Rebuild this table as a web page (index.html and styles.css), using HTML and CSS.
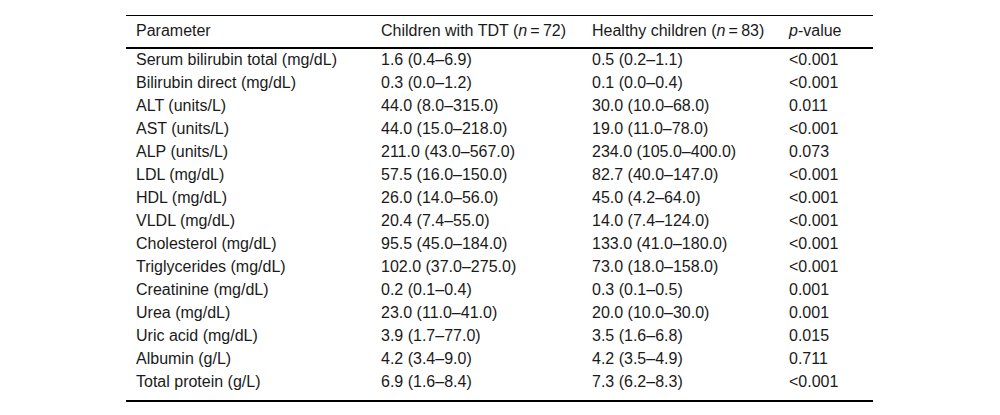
FILE: index.html
```html
<!DOCTYPE html>
<html>
<head>
<meta charset="utf-8">
<link rel="stylesheet" href="styles.css">
</head>
<body>
<div class="wrap">
<table class="data">
<colgroup>
<col class="c1"><col class="c2"><col class="c3"><col class="c4">
</colgroup>
<thead>
<tr><th>Parameter</th><th>Children with TDT (<i>n</i>&#8201;=&#8201;72)</th><th>Healthy children (<i>n</i>&#8201;=&#8201;83)</th><th><i>p</i>-value</th></tr>
</thead>
<tbody>
<tr><td>Serum bilirubin total (mg/dL)</td><td>1.6 (0.4–6.9)</td><td>0.5 (0.2–1.1)</td><td>&lt;0.001</td></tr>
<tr><td>Bilirubin direct (mg/dL)</td><td>0.3 (0.0–1.2)</td><td>0.1 (0.0–0.4)</td><td>&lt;0.001</td></tr>
<tr><td>ALT (units/L)</td><td>44.0 (8.0–315.0)</td><td>30.0 (10.0–68.0)</td><td>0.011</td></tr>
<tr><td>AST (units/L)</td><td>44.0 (15.0–218.0)</td><td>19.0 (11.0–78.0)</td><td>&lt;0.001</td></tr>
<tr><td>ALP (units/L)</td><td>211.0 (43.0–567.0)</td><td>234.0 (105.0–400.0)</td><td>0.073</td></tr>
<tr><td>LDL (mg/dL)</td><td>57.5 (16.0–150.0)</td><td>82.7 (40.0–147.0)</td><td>&lt;0.001</td></tr>
<tr><td>HDL (mg/dL)</td><td>26.0 (14.0–56.0)</td><td>45.0 (4.2–64.0)</td><td>&lt;0.001</td></tr>
<tr><td>VLDL (mg/dL)</td><td>20.4 (7.4–55.0)</td><td>14.0 (7.4–124.0)</td><td>&lt;0.001</td></tr>
<tr><td>Cholesterol (mg/dL)</td><td>95.5 (45.0–184.0)</td><td>133.0 (41.0–180.0)</td><td>&lt;0.001</td></tr>
<tr><td>Triglycerides (mg/dL)</td><td>102.0 (37.0–275.0)</td><td>73.0 (18.0–158.0)</td><td>&lt;0.001</td></tr>
<tr><td>Creatinine (mg/dL)</td><td>0.2 (0.1–0.4)</td><td>0.3 (0.1–0.5)</td><td>0.001</td></tr>
<tr><td>Urea (mg/dL)</td><td>23.0 (11.0–41.0)</td><td>20.0 (10.0–30.0)</td><td>0.001</td></tr>
<tr><td>Uric acid (mg/dL)</td><td>3.9 (1.7–77.0)</td><td>3.5 (1.6–6.8)</td><td>0.015</td></tr>
<tr><td>Albumin (g/L)</td><td>4.2 (3.4–9.0)</td><td>4.2 (3.5–4.9)</td><td>0.711</td></tr>
<tr class="last"><td>Total protein (g/L)</td><td>6.9 (1.6–8.4)</td><td>7.3 (6.2–8.3)</td><td>&lt;0.001</td></tr>
</tbody>
</table>
</div>
</body>
</html>
```

FILE: styles.css
```css
html, body {
  margin: 0;
  padding: 0;
  background: #ffffff;
}
.wrap {
  padding-top: 15px;
  display: flex;
  justify-content: flex-start;
  padding-left: 126px;
}
.data {
  width: 747px;
  border-collapse: collapse;
  table-layout: fixed;
  font-family: "Liberation Sans", Arial, sans-serif;
  font-size: 16px;
  color: #1a1a1a;
  border-top: 1px solid #000;
  border-bottom: 2px solid #000;
}
.c1 { width: 245px; }
.c2 { width: 211px; }
.c3 { width: 197px; }
.c4 { width: 94px; }
.data th {
  font-weight: normal;
  text-align: left;
  line-height: 18px;
  padding: 6px 10px 7px;
  white-space: nowrap;
  border-bottom: 2px solid #000;
}
.data td {
  text-align: left;
  line-height: 18px;
  padding: 2px 10px 3px;
  white-space: nowrap;
}
.data tr.last td {
  padding-bottom: 9px;
}
```
